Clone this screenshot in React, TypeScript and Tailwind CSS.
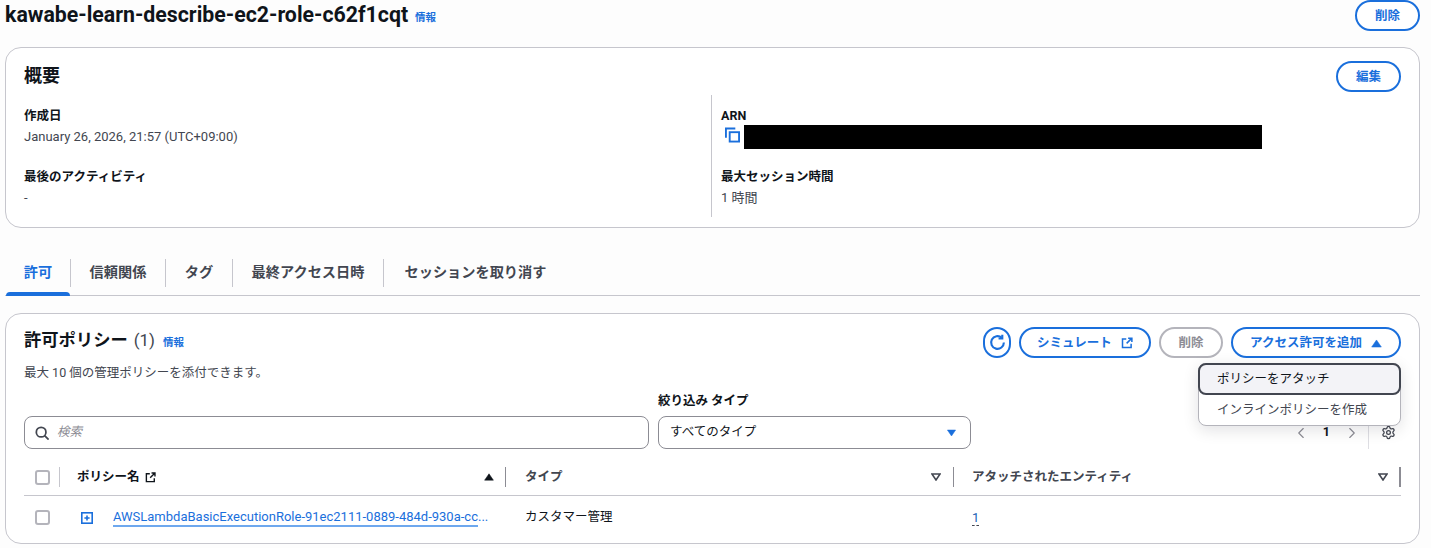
import { ChevronLeft, ChevronRight, Settings } from 'lucide-react'

const font = "font-['Roboto','Noto_Sans_CJK_JP',sans-serif]"

function PillButton({ children, className = '' }: { children: React.ReactNode; className?: string }) {
  return (
    <button className={`flex h-[31px] items-center justify-center rounded-full border-2 border-[#1a6fdc] bg-white pt-px text-[12.5px] font-bold text-[#1a6fdc] ${className}`}>
      {children}
    </button>
  )
}

function ExternalIcon({ className = '' }: { className?: string }) {
  return (
    <svg viewBox="0 0 16 16" fill="none" stroke="currentColor" strokeWidth="2" className={className}>
      <path d="M7 2.5H2v11.5h11.5V9" />
      <path d="M9.5 1.5h5v5M14.5 1.5 7.5 8.5" />
    </svg>
  )
}

function Caret({ up = false, outline = false, className = '' }: { up?: boolean; outline?: boolean; className?: string }) {
  return (
    <svg viewBox="0 0 10 8" className={className} fill={outline ? 'none' : 'currentColor'} stroke="currentColor" strokeWidth={outline ? 1.6 : 0.5}>
      {up ? <path d="M5 .8 9.4 7.2H.6z" /> : <path d="M.9 1h8.2L5 7z" />}
    </svg>
  )
}

function Field({ label, children }: { label: string; children: React.ReactNode }) {
  return (
    <div className="h-[61px]">
      <div className="text-[12.5px] leading-[20px] font-bold text-[#0f141a]">{label}</div>
      <div className="text-[13px] leading-[21px] text-[#424650]">{children}</div>
    </div>
  )
}

function Checkbox() {
  return <span className="block h-[15px] w-[15px] rounded-[3px] border-2 border-[#b4b4bb] bg-white" />
}

function Tab({ label, active = false, className = '' }: { label: string; active?: boolean; className?: string }) {
  return (
    <div className={`relative flex h-[37px] justify-center pt-[4px] text-[14.2px] leading-[20px] font-bold ${active ? 'text-[#1a6fdc]' : 'text-[#424650]'} ${className}`}>
      {label}
      {active && <span className="absolute right-0 -bottom-px left-0 h-[4px] rounded-t-sm bg-[#1a6fdc]" />}
    </div>
  )
}

const TabDivider = () => <span className="mb-[8px] h-[28px] w-px self-end bg-[#c6c6cd]" />

export default function App() {
  return (
    <div className={`${font} h-[548px] w-[1431px] overflow-hidden bg-[#fdfdfd] pr-[11px] pl-[5px] text-[#0f141a]`}>
      {/* Page header */}
      <div className="flex h-[47px] items-start justify-between">
        <div className="flex h-[30px] items-center">
          <h1 className="text-[21.3px] leading-[30px] font-bold text-[#0f141a]">kawabe-learn-describe-ec2-role-c62f1cqt</h1>
          <a className="mt-[5px] ml-[7px] text-[10.5px] font-bold text-[#1a6fdc]">情報</a>
        </div>
        <PillButton className="w-[65px]">削除</PillButton>
      </div>

      {/* Summary */}
      <section className="h-[181px] rounded-2xl border border-[#c6c6cd] bg-white pr-[18px] pl-[18px]">
        <div className="flex h-[47px] items-start justify-between">
          <h2 className="mt-[15px] text-lg leading-[26px] font-bold">概要</h2>
          <PillButton className="mt-[13px] w-[65px]">編集</PillButton>
        </div>
        <div className="grid grid-cols-[687px_1fr]">
          <div className="pt-[11px]">
            <Field label="作成日">January 26, 2026, 21:57 (UTC+09:00)</Field>
            <Field label="最後のアクティビティ">-</Field>
          </div>
          <div className="h-[122px] border-l border-[#c6c6cd] pt-[11px] pl-[9px]">
            <div className="h-[61px]">
              <div className="text-[12.5px] leading-[20px] font-bold">ARN</div>
              <div className="-mt-px flex items-start">
                <svg viewBox="0 0 16 16" fill="none" stroke="#1a6fdc" strokeWidth="2" className="mt-[2px] ml-[4px] h-[16px] w-[15px]">
                  <path d="M1 11V1h10" />
                  <rect x="5" y="5" width="10" height="10" />
                </svg>
                <span className="ml-[4px] h-[24px] w-[518px] bg-black" />
              </div>
            </div>
            <Field label="最大セッション時間">1 時間</Field>
          </div>
        </div>
      </section>

      {/* Tabs */}
      <div className="mt-[30px] flex h-[38px] border-b border-[#c6c6cd] pl-px">
        <Tab label="許可" active className="w-[64px]" />
        <TabDivider />
        <Tab label="信頼関係" className="w-[94px]" />
        <TabDivider />
        <Tab label="タグ" className="w-[66px]" />
        <TabDivider />
        <Tab label="最終アクセス日時" className="w-[150px]" />
        <TabDivider />
        <Tab label="セッションを取り消す" className="w-[183px]" />
      </div>

      {/* Permission policies */}
      <section className="relative mt-[17px] h-[231px] rounded-2xl border border-[#c6c6cd] bg-white pr-[18px] pl-[18px]">
        <div className="flex h-[46px] justify-between">
          <div className="mt-[14px] flex h-[26px] items-center">
            <h2 className="text-[17.3px] font-bold">許可ポリシー</h2>
            <span className="ml-[6px] text-[17px] text-[#424650]">(1)</span>
            <a className="mt-[3px] ml-[8px] text-[10.5px] font-bold text-[#1a6fdc]">情報</a>
          </div>
          <div className="mt-[13px] flex gap-2">
            <button className="flex h-[31px] w-[28px] items-center justify-center rounded-full border-2 border-[#1a6fdc] text-[#1a6fdc]">
              <svg viewBox="0 0 16 16" fill="none" stroke="currentColor" strokeWidth="2" className="h-[17px] w-[17px]">
                <path d="M14 8a6 6 0 1 1-2-4.5" />
                <path d="M12.5 .8v3.4H9" />
              </svg>
            </button>
            <PillButton className="w-[132px] gap-[9px]">
              シミュレート
              <ExternalIcon className="h-[12px] w-[12px]" />
            </PillButton>
            <button className="flex h-[31px] w-[64px] items-center justify-center rounded-full border-2 border-[#b4b4bb] pt-px text-[12.5px] font-bold text-[#8c8c94]">削除</button>
            <PillButton className="w-[170px] gap-[9px]">
              アクセス許可を追加
              <Caret up className="h-[9px] w-[11px]" />
            </PillButton>
          </div>
        </div>
        <p className="text-[12.5px] leading-[26px] text-[#424650]">最大 10 個の管理ポリシーを添付できます。</p>

        <div className="mt-[7px] flex items-end">
          <div className="flex h-[33px] w-[625px] items-center gap-[8px] rounded-lg border border-[#8c8c94] bg-white pl-[10px]">
            <svg viewBox="0 0 16 16" fill="none" stroke="#424650" strokeWidth="2" className="h-[14px] w-[14px]">
              <circle cx="7" cy="7" r="5.5" />
              <path d="M11 11l4.5 4.5" />
            </svg>
            <span className="text-[12.5px] text-[#8c8c94] italic">検索</span>
          </div>
          <div className="ml-[9px] w-[313px]">
            <div className="mb-[7px] text-[12.5px] leading-[16px] font-bold">絞り込み タイプ</div>
            <div className="flex h-[33px] items-center justify-between rounded-lg border border-[#8c8c94] bg-white pr-[13px] pl-[11px] text-[12.5px] text-[#0f141a]">
              すべてのタイプ
              <Caret className="h-[8px] w-[11px] text-[#1a6fdc]" />
            </div>
          </div>
          <div className="ml-auto flex h-[33px] items-center text-[#8c8c94]">
            <ChevronLeft className="h-[18px] w-[18px]" strokeWidth={1.5} />
            <span className="mx-[13px] text-[12.5px] font-bold text-[#0f141a]">1</span>
            <ChevronRight className="h-[18px] w-[18px]" strokeWidth={1.5} />
            <span className="ml-[7px] h-[33px] w-px bg-[#dedee3]" />
            <Settings className="mr-[5px] ml-[12px] h-[15px] w-[15px] text-[#424650]" strokeWidth={2} />
          </div>
        </div>

        {/* Table */}
        <div className="mt-[10px] grid h-[37px] grid-cols-[53px_429px_448px_1fr] items-center border-b border-[#c6c6cd] text-[12.5px] font-bold text-[#424650]">
          <div className="flex h-[20px] items-center justify-between pr-[17px] pl-[11px]">
            <Checkbox />
            <span className="h-[20px] w-px bg-[#c6c6cd]" />
          </div>
          <div className="flex h-[20px] items-center justify-between border-r border-[#8c8c94] pr-[11px]">
            <span className="flex items-center gap-[5px] text-[#0f141a]">
              ポリシー名
              <ExternalIcon className="h-[11px] w-[11px]" />
            </span>
            <Caret up className="h-[8px] w-[10px] text-[#0f141a]" />
          </div>
          <div className="flex h-[20px] items-center justify-between border-r border-[#8c8c94] pr-[12px] pl-[19px]">
            タイプ
            <Caret outline className="h-[8px] w-[10px]" />
          </div>
          <div className="flex h-[20px] items-center justify-between border-r-2 border-[#8c8c94] pr-[11px] pl-[18px]">
            アタッチされたエンティティ
            <Caret outline className="h-[8px] w-[10px]" />
          </div>
        </div>
        <div className="grid h-[43px] grid-cols-[53px_429px_448px_1fr] items-center text-[13px]">
          <div className="pl-[11px]">
            <Checkbox />
          </div>
          <div className="flex items-center">
            <svg viewBox="0 0 12 12" fill="none" stroke="#1a6fdc" strokeWidth="1.6" className="ml-[4px] h-[12px] w-[12px]">
              <rect x=".8" y=".8" width="10.4" height="10.4" />
              <path d="M3.4 6h5.2M6 3.4v5.2" />
            </svg>
            <span className="ml-[20px] leading-[17px] whitespace-nowrap text-[#1a6fdc]">
              <a className="inline-block border-b-2 border-[#6ea8ee]">AWSLambdaBasicExecutionRole-91ec2111-0889-484d-930a-cc</a>...
            </span>
          </div>
          <div className="pl-[19px] text-[12.5px] text-[#0f141a]">カスタマー管理</div>
          <div className="pl-[18px]">
            <span className="border-b border-dashed border-[#424650] text-[#1a5fb4]">1</span>
          </div>
        </div>

        {/* Add permissions menu */}
        <div className="absolute top-[49px] right-[18px] w-[203px] rounded-lg border border-[#b4b4bb] bg-white text-[12.5px] text-[#424650] shadow-[0_4px_16px_rgba(0,7,22,0.12)]">
          <div className="-m-px flex h-[32px] items-center rounded-lg border-2 border-[#424650] bg-[#f3f3f7] pl-[17px] text-[#0f141a]">ポリシーをアタッチ</div>
          <div className="flex h-[31px] items-center pt-px pl-[18px]">インラインポリシーを作成</div>
        </div>
      </section>
    </div>
  )
}
